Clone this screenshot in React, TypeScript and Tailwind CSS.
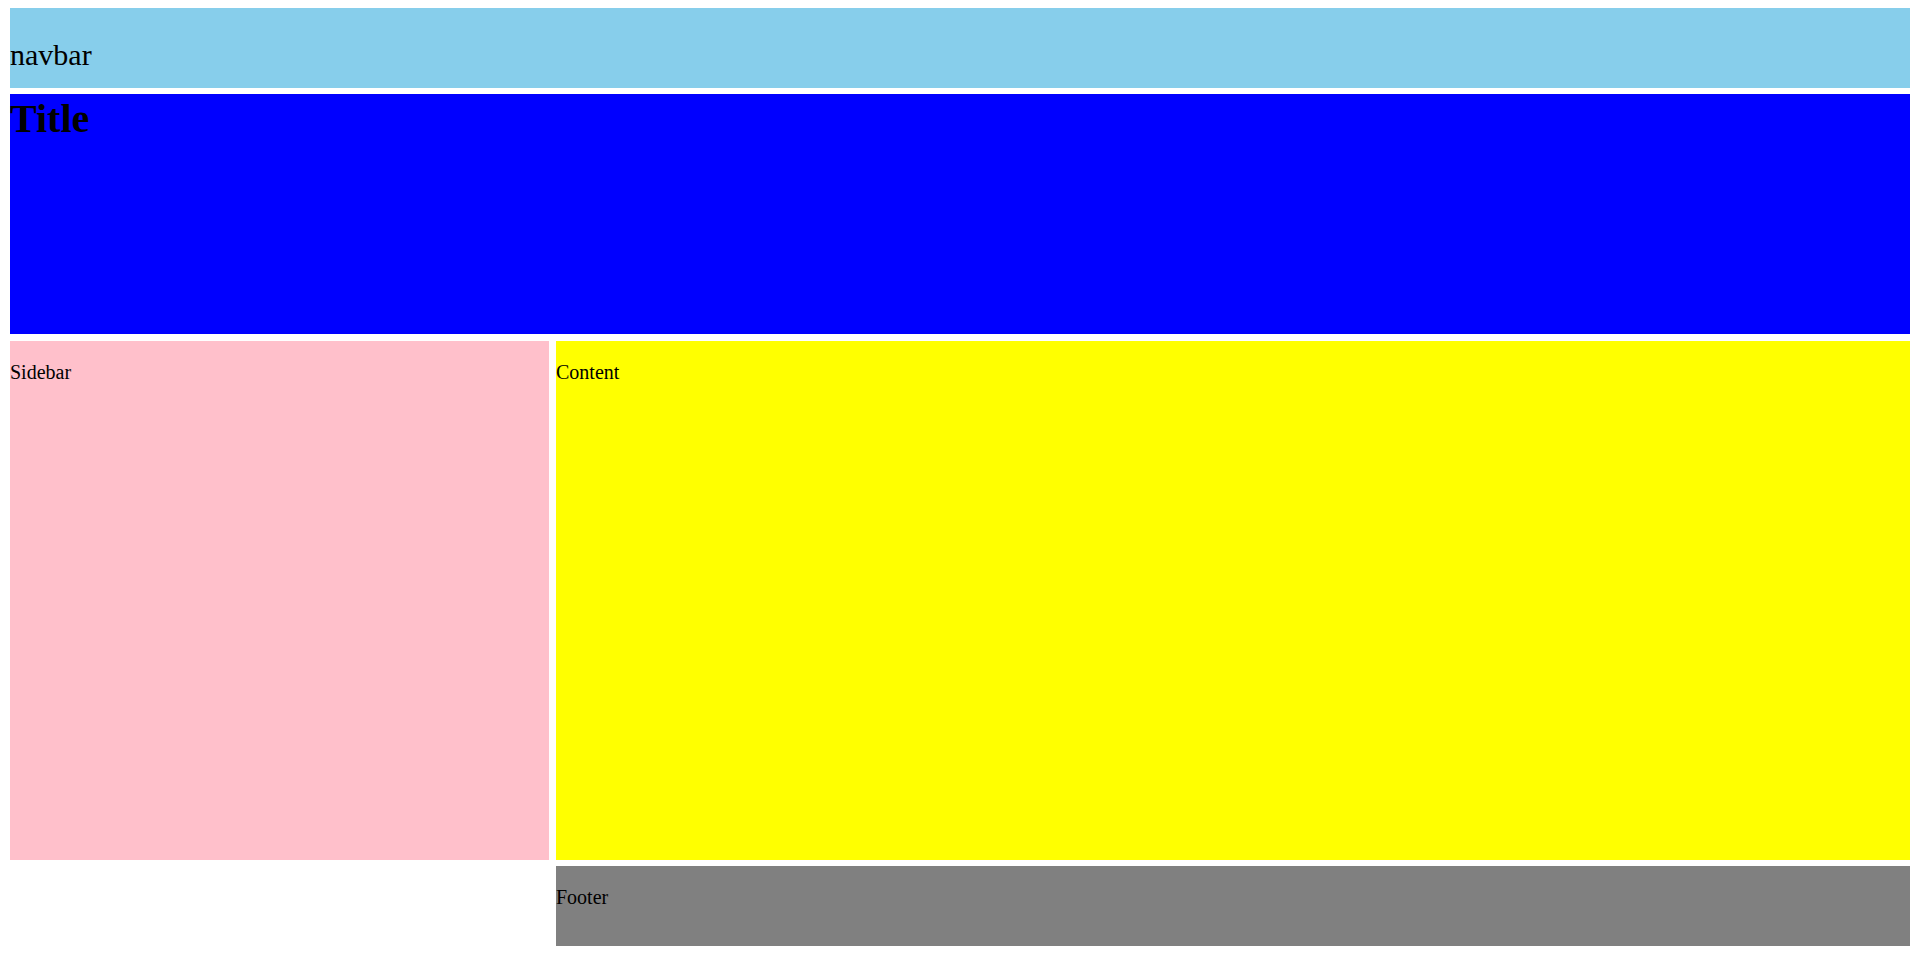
import React from 'react';

const App: React.FC = () => {
  return (
    <div className="min-h-screen bg-white pt-[8px] pl-[10px] pr-[9px] pb-[8px] text-black" style={{ fontFamily: '"Liberation Serif", "Times New Roman", serif' }}>
      {/* Navbar */}
      <div className="h-[80px] bg-[#87ceeb] overflow-visible">
        <p className="m-0 pt-[30px] text-[30px] leading-[1.107]">navbar</p>
      </div>

      {/* Title */}
      <div className="mt-[6px] h-[240px] bg-[#0000ff]">
        <h1 className="m-0 pt-[3px] text-[40px] font-bold leading-[1.107]">Title</h1>
      </div>

      {/* Sidebar / content / footer */}
      <div className="mt-[7px] grid grid-cols-[539px_1fr] grid-rows-[519px_80px] gap-x-[7px] gap-y-[6px]">
        <div className="bg-[#ffc0cb] pt-[20px]">
          <p className="m-0 text-[20px] leading-[1.107]">Sidebar</p>
        </div>
        <div className="bg-[#ffff00] pt-[20px]">
          <p className="m-0 text-[20px] leading-[1.107]">Content</p>
        </div>
        <div className="col-start-2 bg-[#808080] pt-[20px]">
          <p className="m-0 text-[20px] leading-[1.107]">Footer</p>
        </div>
      </div>
    </div>
  );
};

export default App;
